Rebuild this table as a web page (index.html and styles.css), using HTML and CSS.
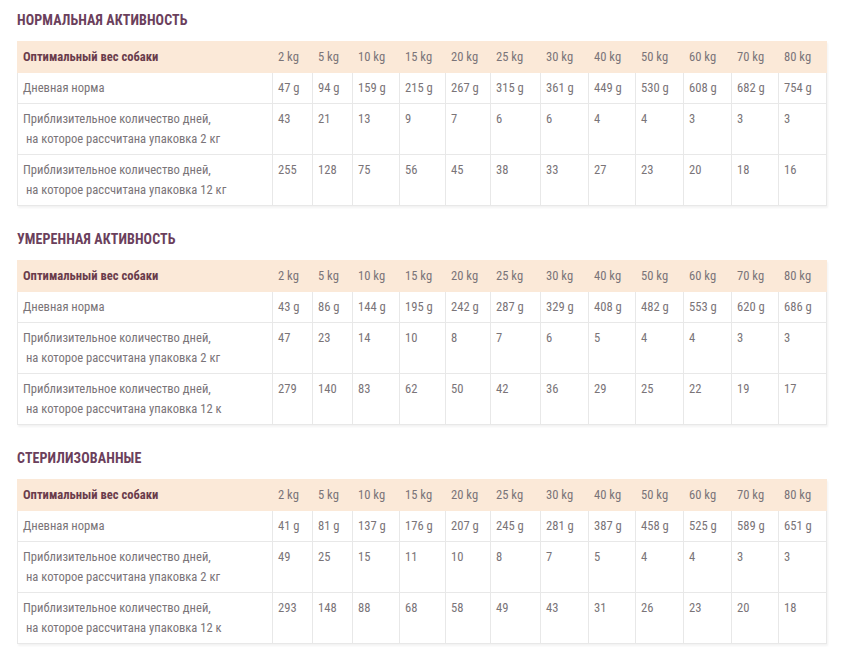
FILE: index.html
```html
<!DOCTYPE html>
<html lang="ru">
<head>
<meta charset="utf-8">
<title>Нормы кормления</title>
<link rel="stylesheet" href="styles.css">
</head>
<body>
<div class="page">
  <section class="block">
    <h2 class="title">Нормальная активность</h2>
    <table class="feed">
      <tr class="head"><th>Оптимальный вес собаки</th><td>2 kg</td><td>5 kg</td><td>10 kg</td><td>15 kg</td><td>20 kg</td><td>25 kg</td><td>30 kg</td><td>40 kg</td><td>50 kg</td><td>60 kg</td><td>70 kg</td><td>80 kg</td></tr>
      <tr><td>Дневная норма</td><td>47 g</td><td>94 g</td><td>159 g</td><td>215 g</td><td>267 g</td><td>315 g</td><td>361 g</td><td>449 g</td><td>530 g</td><td>608 g</td><td>682 g</td><td>754 g</td></tr>
      <tr><td>Приблизительное количество дней,<br>&nbsp;на которое рассчитана упаковка 2 кг</td><td>43</td><td>21</td><td>13</td><td>9</td><td>7</td><td>6</td><td>6</td><td>4</td><td>4</td><td>3</td><td>3</td><td>3</td></tr>
      <tr><td>Приблизительное количество дней,<br>&nbsp;на которое рассчитана упаковка 12 кг</td><td>255</td><td>128</td><td>75</td><td>56</td><td>45</td><td>38</td><td>33</td><td>27</td><td>23</td><td>20</td><td>18</td><td>16</td></tr>
    </table>
  </section>
  <section class="block">
    <h2 class="title">Умеренная активность</h2>
    <table class="feed">
      <tr class="head"><th>Оптимальный вес собаки</th><td>2 kg</td><td>5 kg</td><td>10 kg</td><td>15 kg</td><td>20 kg</td><td>25 kg</td><td>30 kg</td><td>40 kg</td><td>50 kg</td><td>60 kg</td><td>70 kg</td><td>80 kg</td></tr>
      <tr><td>Дневная норма</td><td>43 g</td><td>86 g</td><td>144 g</td><td>195 g</td><td>242 g</td><td>287 g</td><td>329 g</td><td>408 g</td><td>482 g</td><td>553 g</td><td>620 g</td><td>686 g</td></tr>
      <tr><td>Приблизительное количество дней,<br>&nbsp;на которое рассчитана упаковка 2 кг</td><td>47</td><td>23</td><td>14</td><td>10</td><td>8</td><td>7</td><td>6</td><td>5</td><td>4</td><td>4</td><td>3</td><td>3</td></tr>
      <tr><td>Приблизительное количество дней,<br>&nbsp;на которое рассчитана упаковка 12 к</td><td>279</td><td>140</td><td>83</td><td>62</td><td>50</td><td>42</td><td>36</td><td>29</td><td>25</td><td>22</td><td>19</td><td>17</td></tr>
    </table>
  </section>
  <section class="block">
    <h2 class="title">Стерилизованные</h2>
    <table class="feed">
      <tr class="head"><th>Оптимальный вес собаки</th><td>2 kg</td><td>5 kg</td><td>10 kg</td><td>15 kg</td><td>20 kg</td><td>25 kg</td><td>30 kg</td><td>40 kg</td><td>50 kg</td><td>60 kg</td><td>70 kg</td><td>80 kg</td></tr>
      <tr><td>Дневная норма</td><td>41 g</td><td>81 g</td><td>137 g</td><td>176 g</td><td>207 g</td><td>245 g</td><td>281 g</td><td>387 g</td><td>458 g</td><td>525 g</td><td>589 g</td><td>651 g</td></tr>
      <tr><td>Приблизительное количество дней,<br>&nbsp;на которое рассчитана упаковка 2 кг</td><td>49</td><td>25</td><td>15</td><td>11</td><td>10</td><td>8</td><td>7</td><td>5</td><td>4</td><td>4</td><td>3</td><td>3</td></tr>
      <tr><td>Приблизительное количество дней,<br>&nbsp;на которое рассчитана упаковка 12 к</td><td>293</td><td>148</td><td>88</td><td>68</td><td>58</td><td>49</td><td>43</td><td>31</td><td>26</td><td>23</td><td>20</td><td>18</td></tr>
    </table>
  </section>
</div>
</body>
</html>
```
FILE: styles.css
```css
html, body {
  margin: 0;
  padding: 0;
  background: #ffffff;
}
.page {
  padding: 11px 18px 0 17px;
  font-family: "Roboto Condensed", Roboto, "Noto Sans", sans-serif;
  font-stretch: condensed;
}
.block {
  margin-bottom: 24px;
}
.title {
  margin: 0 0 12px 0;
  font-size: 14px;
  line-height: 18px;
  font-weight: 700;
  text-transform: uppercase;
  color: #6b3f5c;
  letter-spacing: 0.1px;
}
.feed {
  width: 809px;
  table-layout: fixed;
  border-collapse: collapse;
  font-size: 12.6px;
  line-height: 20px;
  color: #7a7478;
  box-shadow: 1px 2px 2px rgba(0, 0, 0, 0.05);
}
.feed th,
.feed td {
  box-sizing: border-box;
  border: 1px solid #e8e8e8;
  padding: 5px 4px 5px 5px;
  text-align: left;
  vertical-align: top;
  font-weight: 400;
  white-space: nowrap;
  overflow: hidden;
}
.feed .head th,
.feed .head td {
  background: #fbe9d8;
  border-color: #fbe9d8;
}
.feed .head th {
  font-weight: 700;
  color: #6a3c4c;
}
.feed tr > :nth-child(1) { width: 255px; }
.feed tr > :nth-child(2) { width: 40px; }
.feed tr > :nth-child(3) { width: 40px; }
.feed tr > :nth-child(4) { width: 47px; }
.feed tr > :nth-child(5) { width: 46px; }
.feed tr > :nth-child(6) { width: 45px; }
.feed tr > :nth-child(7) { width: 50px; }
.feed tr > :nth-child(8) { width: 48px; }
.feed tr > :nth-child(9) { width: 47px; }
.feed tr > :nth-child(10) { width: 48px; }
.feed tr > :nth-child(11) { width: 48px; }
.feed tr > :nth-child(12) { width: 47px; }
.feed tr > :nth-child(13) { width: 48px; }
```
